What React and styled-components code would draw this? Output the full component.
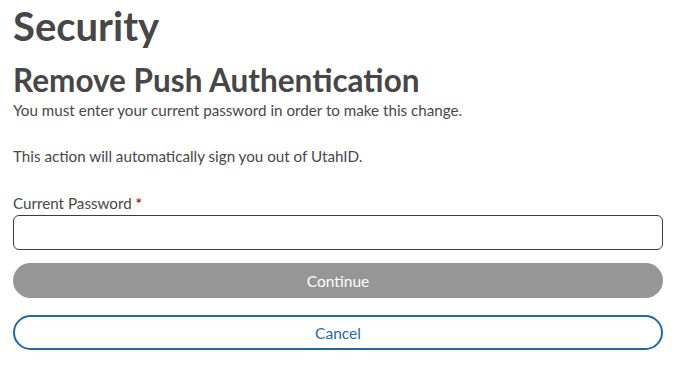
import React from 'react';
import styled, { createGlobalStyle } from 'styled-components';

const GlobalStyle = createGlobalStyle`
  body {
    margin: 0;
    background: #ffffff;
    font-family: Lato, "Noto Sans", sans-serif;
    color: #474747;
  }
`;

const Page = styled.div`
  width: 650px;
  padding: 2px 0 0 13px;
  display: flex;
  flex-direction: column;
`;

const Title = styled.h1`
  margin: 0;
  font-size: 40px;
  line-height: 48px;
  font-weight: 700;
  color: #474747;
`;

const Subtitle = styled.h2`
  margin: 11px 0 0;
  font-size: 31.5px;
  line-height: 38px;
  font-weight: 700;
  color: #474747;
`;

const Text = styled.p`
  margin: ${(p) => p.$top || 0}px 0 0;
  font-size: 15.2px;
  line-height: 20px;
  color: #474747;
`;

const Label = styled.label`
  margin-top: 27px;
  font-size: 15.2px;
  line-height: 20px;
  color: #474747;

  span {
    color: #a31f1f;
    font-weight: 700;
  }
`;

const Input = styled.input`
  box-sizing: border-box;
  margin-top: 2px;
  width: 100%;
  height: 35px;
  border: 1px solid #3c3c3c;
  border-radius: 6px;
  padding: 0 10px;
  font: inherit;
`;

const Button = styled.button`
  box-sizing: border-box;
  width: 100%;
  height: 35px;
  margin-top: ${(p) => p.$top}px;
  border-radius: 18px;
  font-family: Lato, "Noto Sans", sans-serif;
  font-size: 15.5px;
  cursor: pointer;
  border: ${(p) => (p.$outline ? '2px solid #1e6aa8' : 'none')};
  background: ${(p) => (p.$outline ? '#ffffff' : '#969696')};
  color: ${(p) => (p.$outline ? '#1e6aa8' : '#ffffff')};
`;

export default function App() {
  return (
    <>
      <GlobalStyle />
      <Page>
        <Title>Security</Title>
        <Subtitle>Remove Push Authentication</Subtitle>
        <Text $top={1}>You must enter your current password in order to make this change.</Text>
        <Text $top={26}>This action will automatically sign you out of UtahID.</Text>
        <Label>
          Current Password <span>*</span>
        </Label>
        <Input type="password" />
        <Button $top={13} disabled>
          Continue
        </Button>
        <Button $top={17} $outline>
          Cancel
        </Button>
      </Page>
    </>
  );
}
